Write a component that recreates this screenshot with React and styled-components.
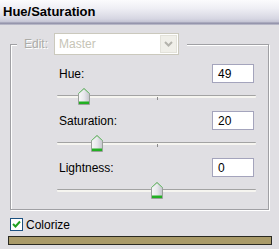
import React from "react";
import styled, { createGlobalStyle } from "styled-components";

const GlobalStyle = createGlobalStyle`
  html, body { margin: 0; padding: 0; background: #e0dfe3; }
  body { font-family: "Liberation Sans", Arial, sans-serif; font-size: 12px; color: #000; }
  * { box-sizing: border-box; }
`;

const Window = styled.div`
  width: 279px;
  height: 249px;
  display: flex;
  flex-direction: column;
  background: #e0dfe3;
  overflow: hidden;
`;

const TitleBar = styled.div`
  flex-shrink: 0;
  height: 25px;
  display: flex;
  align-items: center;
  padding: 0 0 2px 3px;
  font-weight: bold;
  font-size: 13px;
  color: #000;
  background: linear-gradient(#fbfbfd 0%, #eeeef4 35%, #d6d6e2 75%, #c4c4d4 88%, #8e8ea6 92%, #9d9db3 96%, #d0d0da 100%);
`;

const Body = styled.div`
  flex-shrink: 0;
  display: flex;
  flex-direction: column;
  padding: 8px 7px 0 8px;
`;

const Group = styled.fieldset`
  flex-shrink: 0;
  margin: 0 3px 0 2px;
  padding: 0;
  border: 1px solid #a0a0a4;
  box-shadow: 1px 1px 0 #ffffff, inset 1px 1px 0 #ffffff;
  min-width: 0;
`;

const Legend = styled.legend`
  margin-left: 6px;
  padding: 0 8px 0 7px;
  display: flex;
  align-items: center;
  background: #e0dfe3;
`;

const GroupContent = styled.div`
  display: flex;
  flex-direction: column;
  gap: 6px;
  padding: 9px 12px 10px 46px;
`;

const DisabledLabel = styled.span`
  color: #acaca8;
  text-shadow: 1px 1px 0 #ffffff;
  margin-right: 6px;
`;

const Select = styled.div`
  width: 125px;
  height: 22px;
  display: flex;
  border: 1px solid #cbc9bd;
  background: #ffffff;
`;

const SelectText = styled.div`
  flex: 1;
  display: flex;
  align-items: center;
  padding-left: 4px;
  color: #c6c4b6;
`;

const SelectButton = styled.div`
  width: 17px;
  margin: 1px;
  display: flex;
  align-items: center;
  justify-content: center;
  background: #f0efe9;
  border: 1px solid #e3e2da;
`;

const Control = styled.div`
  flex-shrink: 0;
  display: flex;
  flex-direction: column;
  gap: 5px;
`;

const ControlHeader = styled.div`
  flex-shrink: 0;
  height: 19px;
  display: flex;
  align-items: center;
  justify-content: space-between;
  padding: 0 2px;
`;

const Label = styled.span`
  font-size: 12px;
`;

const NumberBox = styled.div`
  width: 42px;
  height: 19px;
  border: 1px solid #a4a4bc;
  background: #ffffff;
  display: flex;
  align-items: center;
  padding-left: 5px;
  font-size: 12px;
`;

const Slider = styled.div`
  flex-shrink: 0;
  position: relative;
  height: 17px;
`;

const Track = styled.div`
  position: absolute;
  left: 0;
  right: 0;
  top: 7px;
  height: 3px;
  border-top: 1px solid #a3a3a3;
  background: #f6f5f0;
  border-radius: 1px;
`;

const Tick = styled.div`
  position: absolute;
  left: 50%;
  top: 9px;
  width: 1px;
  height: 3px;
  background: #8a8a8a;
`;

const Thumb = styled.svg`
  position: absolute;
  top: 0;
  transform: translateX(-50%);
`;

const CheckRow = styled.div`
  flex-shrink: 0;
  display: flex;
  align-items: center;
  gap: 3px;
  margin: 8px 0 0 2px;
  height: 13px;
`;

const Checkbox = styled.div`
  width: 13px;
  height: 13px;
  border: 1px solid #1c5180;
  background: #ffffff;
  display: flex;
  align-items: center;
  justify-content: center;
`;

const ColorBar = styled.div`
  flex-shrink: 0;
  margin-top: 5px;
  height: 9px;
  border: 1px solid #2a2a22;
  background: #a99a68;
`;

const SliderThumb = ({ pos }) => (
  <Thumb width="12" height="17" viewBox="0 0 12 17" style={{ left: `${pos * 100}%` }}>
    <defs>
      <linearGradient id="tg" x1="0" y1="0" x2="1" y2="0">
        <stop offset="0" stopColor="#f8f8f8" />
        <stop offset="0.5" stopColor="#e8e8ec" />
        <stop offset="1" stopColor="#c4c4cc" />
      </linearGradient>
    </defs>
    <polygon points="0.5,5.5 6,0.5 11.5,5.5 11.5,16.5 0.5,16.5" fill="url(#tg)" stroke="#9aa09a" />
    <polyline points="0.5,5.5 6,0.5 11.5,5.5" fill="none" stroke="#6cc46c" />
    <rect x="1" y="13.5" width="10" height="2.5" fill="#22b022" />
  </Thumb>
);

const controls = [
  { label: "Hue:", value: 49, pos: 49 / 360 },
  { label: "Saturation:", value: 20, pos: 20 / 100 },
  { label: "Lightness:", value: 0, pos: 0.5 },
];

export default function App() {
  return (
    <Window>
      <GlobalStyle />
      <TitleBar>Hue/Saturation</TitleBar>
      <Body>
        <Group>
          <Legend>
            <DisabledLabel>Edit:</DisabledLabel>
            <Select>
              <SelectText>Master</SelectText>
              <SelectButton>
                <svg width="9" height="6" viewBox="0 0 9 6">
                  <polyline points="1,1 4.5,4.5 8,1" fill="none" stroke="#b4b3ac" strokeWidth="2" />
                </svg>
              </SelectButton>
            </Select>
          </Legend>
          <GroupContent>
            {controls.map((c) => (
              <Control key={c.label}>
                <ControlHeader>
                  <Label>{c.label}</Label>
                  <NumberBox>{c.value}</NumberBox>
                </ControlHeader>
                <Slider>
                  <Track />
                  <Tick />
                  <SliderThumb pos={c.pos} />
                </Slider>
              </Control>
            ))}
          </GroupContent>
        </Group>
        <CheckRow>
          <Checkbox>
            <svg width="9" height="9" viewBox="0 0 9 9">
              <polyline points="1,4 3.5,6.5 8,1.5" fill="none" stroke="#21a121" strokeWidth="2" />
            </svg>
          </Checkbox>
          <Label>Colorize</Label>
        </CheckRow>
        <ColorBar />
      </Body>
    </Window>
  );
}
